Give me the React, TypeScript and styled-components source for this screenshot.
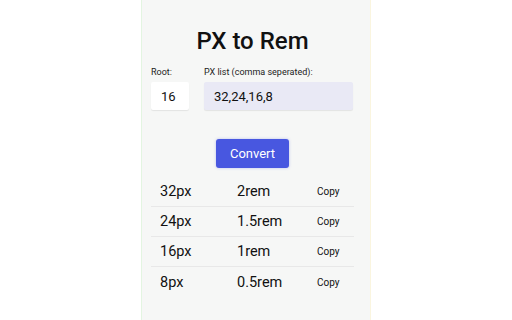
import React from 'react';
import styled, { createGlobalStyle } from 'styled-components';

const GlobalStyle = createGlobalStyle`
    html, body {
        margin: 0;
        padding: 0;
        background: #ffffff;
    }
    body {
        font-family: Roboto, 'Liberation Sans', sans-serif;
        color: #111111;
    }
`;

const Panel = styled.div`
    box-sizing: border-box;
    width: 230px;
    height: 320px;
    margin: 0 auto;
    background: #f6f7f6;
    border-left: 1px solid #e3f5e1;
    border-right: 1px solid #faf5df;
    padding: 26px 8px 0 9px;
`;

const Title = styled.h1`
    margin: 0;
    padding-right: 8px;
    text-align: center;
    font-size: 24px;
    font-weight: 500;
    line-height: 30px;
    color: #111;
`;

const Fields = styled.div`
    display: flex;
    gap: 15px;
    margin-top: 11px;
`;

const Field = styled.label<{ width: number }>`
    display: flex;
    flex-direction: column;
    width: ${({ width }) => width}px;
`;

const Label = styled.span`
    font-size: 9px;
    line-height: 11px;
    color: #222;
    margin-bottom: 4px;
`;

const Input = styled.input<{ tint?: boolean }>`
    box-sizing: border-box;
    height: 28px;
    width: 100%;
    border: none;
    border-radius: 2px;
    padding: 0 10px;
    font-family: Roboto, 'Liberation Sans', sans-serif;
    font-size: 13px;
    color: #111;
    background: ${({ tint }) => (tint ? '#e9e9f5' : '#ffffff')};
    box-shadow: 0 1px 1px rgba(0, 0, 0, 0.08);
    outline: none;
`;

const ButtonRow = styled.div`
    display: flex;
    justify-content: center;
    padding-right: 8px;
    margin-top: 29px;
`;

const ConvertButton = styled.button`
    width: 73px;
    height: 29px;
    border: none;
    border-radius: 3px;
    background: #4857e0;
    color: #fff;
    font-family: Roboto, 'Liberation Sans', sans-serif;
    font-size: 13px;
    box-shadow: 0 0 3px rgba(72, 87, 224, 0.35);
`;

const Results = styled.div`
    margin-top: 9px;
`;

const Row = styled.div<{ last?: boolean }>`
    box-sizing: border-box;
    display: grid;
    grid-template-columns: 77px 80px auto;
    align-items: center;
    height: 30px;
    padding-left: 9px;
    border-bottom: ${({ last }) => (last ? 'none' : '1.5px solid #e8e8e8')};
    margin-right: 8px;
`;

const Cell = styled.span`
    font-size: 14.5px;
    color: #111;
`;

const CopyButton = styled.button`
    border: none;
    background: none;
    padding: 0;
    text-align: left;
    font-family: Roboto, 'Liberation Sans', sans-serif;
    font-size: 10px;
    color: #111;
`;

const rows = [
    { px: '32px', rem: '2rem' },
    { px: '24px', rem: '1.5rem' },
    { px: '16px', rem: '1rem' },
    { px: '8px', rem: '0.5rem' },
];

const App: React.FC = () => {
    return (
        <>
            <GlobalStyle />
            <Panel>
                <Title>PX to Rem</Title>
                <Fields>
                    <Field width={38}>
                        <Label>Root:</Label>
                        <Input defaultValue="16" />
                    </Field>
                    <Field width={149}>
                        <Label>PX list (comma seperated):</Label>
                        <Input tint defaultValue="32,24,16,8" />
                    </Field>
                </Fields>
                <ButtonRow>
                    <ConvertButton>Convert</ConvertButton>
                </ButtonRow>
                <Results>
                    {rows.map((r, i) => (
                        <Row key={r.px} last={i === rows.length - 1}>
                            <Cell>{r.px}</Cell>
                            <Cell>{r.rem}</Cell>
                            <CopyButton>Copy</CopyButton>
                        </Row>
                    ))}
                </Results>
            </Panel>
        </>
    );
};

export default App;
